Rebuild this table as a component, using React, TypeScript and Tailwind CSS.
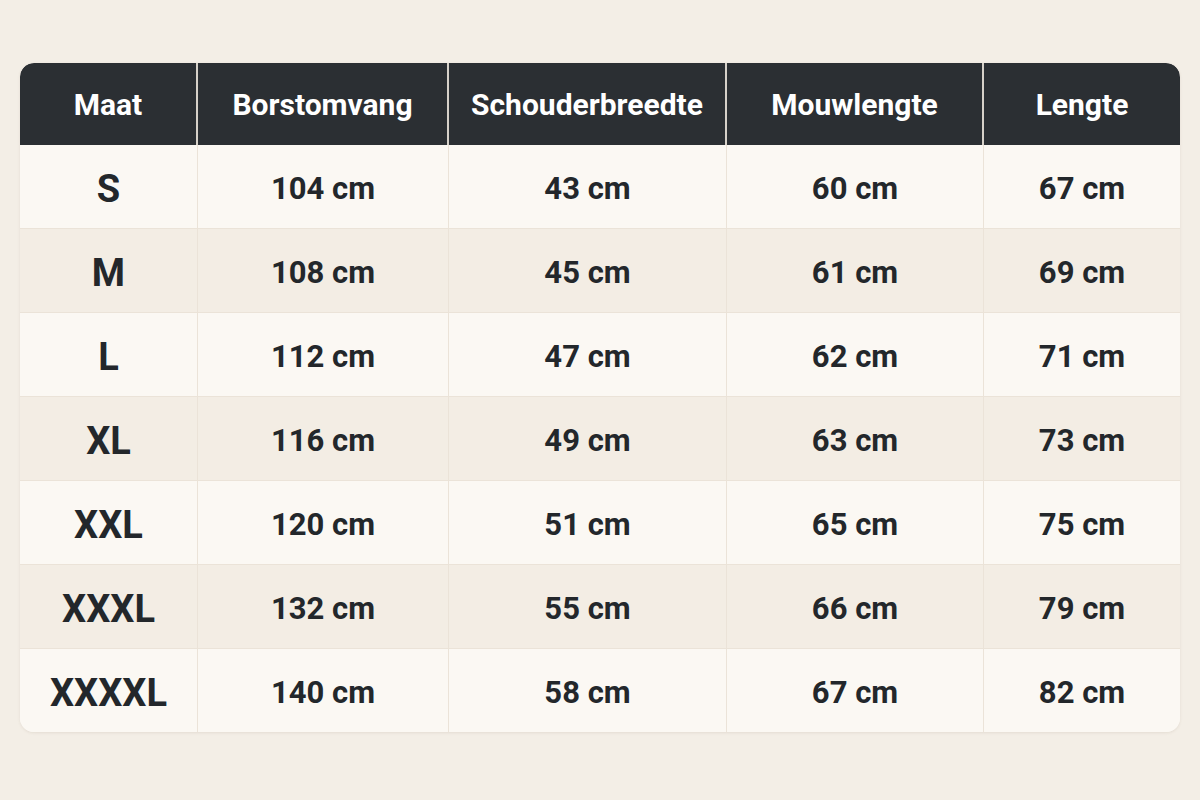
const headers = ['Maat', 'Borstomvang', 'Schouderbreedte', 'Mouwlengte', 'Lengte']

const rows = [
  ['S', '104 cm', '43 cm', '60 cm', '67 cm'],
  ['M', '108 cm', '45 cm', '61 cm', '69 cm'],
  ['L', '112 cm', '47 cm', '62 cm', '71 cm'],
  ['XL', '116 cm', '49 cm', '63 cm', '73 cm'],
  ['XXL', '120 cm', '51 cm', '65 cm', '75 cm'],
  ['XXXL', '132 cm', '55 cm', '66 cm', '79 cm'],
  ['XXXXL', '140 cm', '58 cm', '67 cm', '82 cm'],
]

export default function App() {
  return (
    <div
      className="min-h-screen w-full bg-[#f3eee6] px-[20px] pt-[63px]"
      style={{ fontFamily: 'Roboto, "Liberation Sans", sans-serif' }}
    >
      <div className="overflow-hidden rounded-[14px] bg-[#fbf8f3] shadow-[0_1px_3px_rgba(120,100,70,0.12)]">
        {/* kop */}
        <div className="grid grid-cols-[178px_251px_278px_257px_196px]">
          {headers.map((h, i) => (
            <div
              key={h}
              className={`flex h-[82px] items-center justify-center bg-[#2b2f33] text-[30px] font-bold text-white ${
                i === 0 ? 'rounded-tl-[14px]' : ''
              } ${i === headers.length - 1 ? 'rounded-tr-[14px]' : 'border-r-2 border-[#d6d1c9]'}`}
            >
              {h}
            </div>
          ))}
        </div>

        {/* maten */}
        {rows.map((r, ri) => (
          <div
            key={r[0]}
            className={`grid grid-cols-[178px_251px_278px_257px_196px] ${
              ri % 2 === 0 ? 'bg-[#fbf8f3]' : 'bg-[#f3ede4]'
            } ${ri > 0 ? 'border-t border-[#ebe3d8]' : ''}`}
          >
            {r.map((c, ci) => (
              <div
                key={ci}
                className={`flex h-[83px] items-center justify-center pt-[5px] font-bold text-[#23272b] ${
                  ci === 0 ? 'text-[38px]' : 'text-[31px]'
                } ${ci < r.length - 1 ? 'border-r border-[#ebe3d8]' : ''}`}
              >
                {c}
              </div>
            ))}
          </div>
        ))}
      </div>
    </div>
  )
}
